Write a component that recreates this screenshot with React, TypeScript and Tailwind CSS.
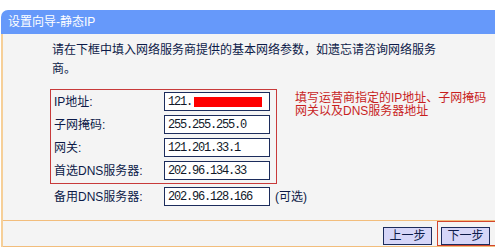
const FONT = "font-['Liberation_Sans','Noto_Sans_CJK_SC',sans-serif]";
const MONO = "font-['Liberation_Mono','Noto_Sans_CJK_SC',monospace]";

type Row = { label: string; value: string; masked?: boolean };

const ROWS: Row[] = [
  { label: "IP地址:", value: "121.", masked: true },
  { label: "子网掩码:", value: "255.255.255.0" },
  { label: "网关:", value: "121.201.33.1" },
  { label: "首选DNS服务器:", value: "202.96.134.33" },
];

function Field({ value, masked }: { value: string; masked?: boolean }) {
  return (
    <div className="w-[106px] h-[19px] bg-white border border-[#1c2c5c] flex items-center pl-[3px]">
      <span className={`${MONO} text-[12px] leading-none tracking-[-1.2px] text-[#101828]`}>{value}</span>
      {masked && <span className="ml-[2px] w-[68px] h-[10px] bg-[#ff0000]" />}
    </div>
  );
}

function Label({ text }: { text: string }) {
  return <div className="w-[110px] text-[12px] leading-none text-[#0c1a48]">{text}</div>;
}

function StepButton({ text }: { text: string }) {
  return (
    <button className="w-[49px] h-[18px] bg-[#d6d6f8] border border-[#1c2c5c] text-[12px] leading-none text-[#0c1a48] flex items-center justify-center">
      {text}
    </button>
  );
}

export default function App() {
  return (
    <div className={`${FONT} w-[495px] h-[251px] bg-white pt-[10px] overflow-hidden`}>
      <div className="ml-[1px] flex flex-col">
        <div className="h-[24px] bg-[#6699fa] rounded-tl-[7px] flex items-center pl-[7px] text-white text-[12px]">
          设置向导-静态IP
        </div>
        <div className="border-l-2 border-[#f6cf98] bg-[#f4f4f4] flex flex-col">
          <p className="pl-[49px] pr-[50px] pt-[7px] text-[12px] leading-[19px] text-[#0c1a48]">
            请在下框中填入网络服务商提供的基本网络参数，如遗忘请咨询网络服务商。
          </p>
          <div className="flex mt-[10px]">
            <div className="ml-[47px] w-[227px] border border-[#c83a3a] flex flex-col gap-[4px] pt-[2px] pb-[3px]">
              {ROWS.map((r) => (
                <div key={r.label} className="flex items-center pl-[3px]">
                  <Label text={r.label} />
                  <Field value={r.value} masked={r.masked} />
                </div>
              ))}
            </div>
            <div className="ml-[18px] pt-[3px] text-[12px] leading-[13px] text-[#c81e1e]">
              <div>填写运营商指定的IP地址、子网掩码</div>
              <div>网关以及DNS服务器地址</div>
            </div>
          </div>
          <div className="h-[19px] flex items-center ml-[51px] mt-[3px]">
            <Label text="备用DNS服务器:" />
            <Field value="202.96.128.166" />
            <span className="ml-[5px] text-[12px] leading-none text-[#0c1a48]">(可选)</span>
          </div>
          <div className="mt-[14px] h-[27px] border-y border-[#f2bd7c] flex justify-end items-start">
            <div className="mt-[6px]">
              <StepButton text="上一步" />
            </div>
            <div className="ml-[5px] -mr-[1px] w-[59px] h-[25px] border border-[#d2452c] pl-[3px] pt-[5px] flex items-start">
              <StepButton text="下一步" />
            </div>
          </div>
        </div>
      </div>
    </div>
  );
}
